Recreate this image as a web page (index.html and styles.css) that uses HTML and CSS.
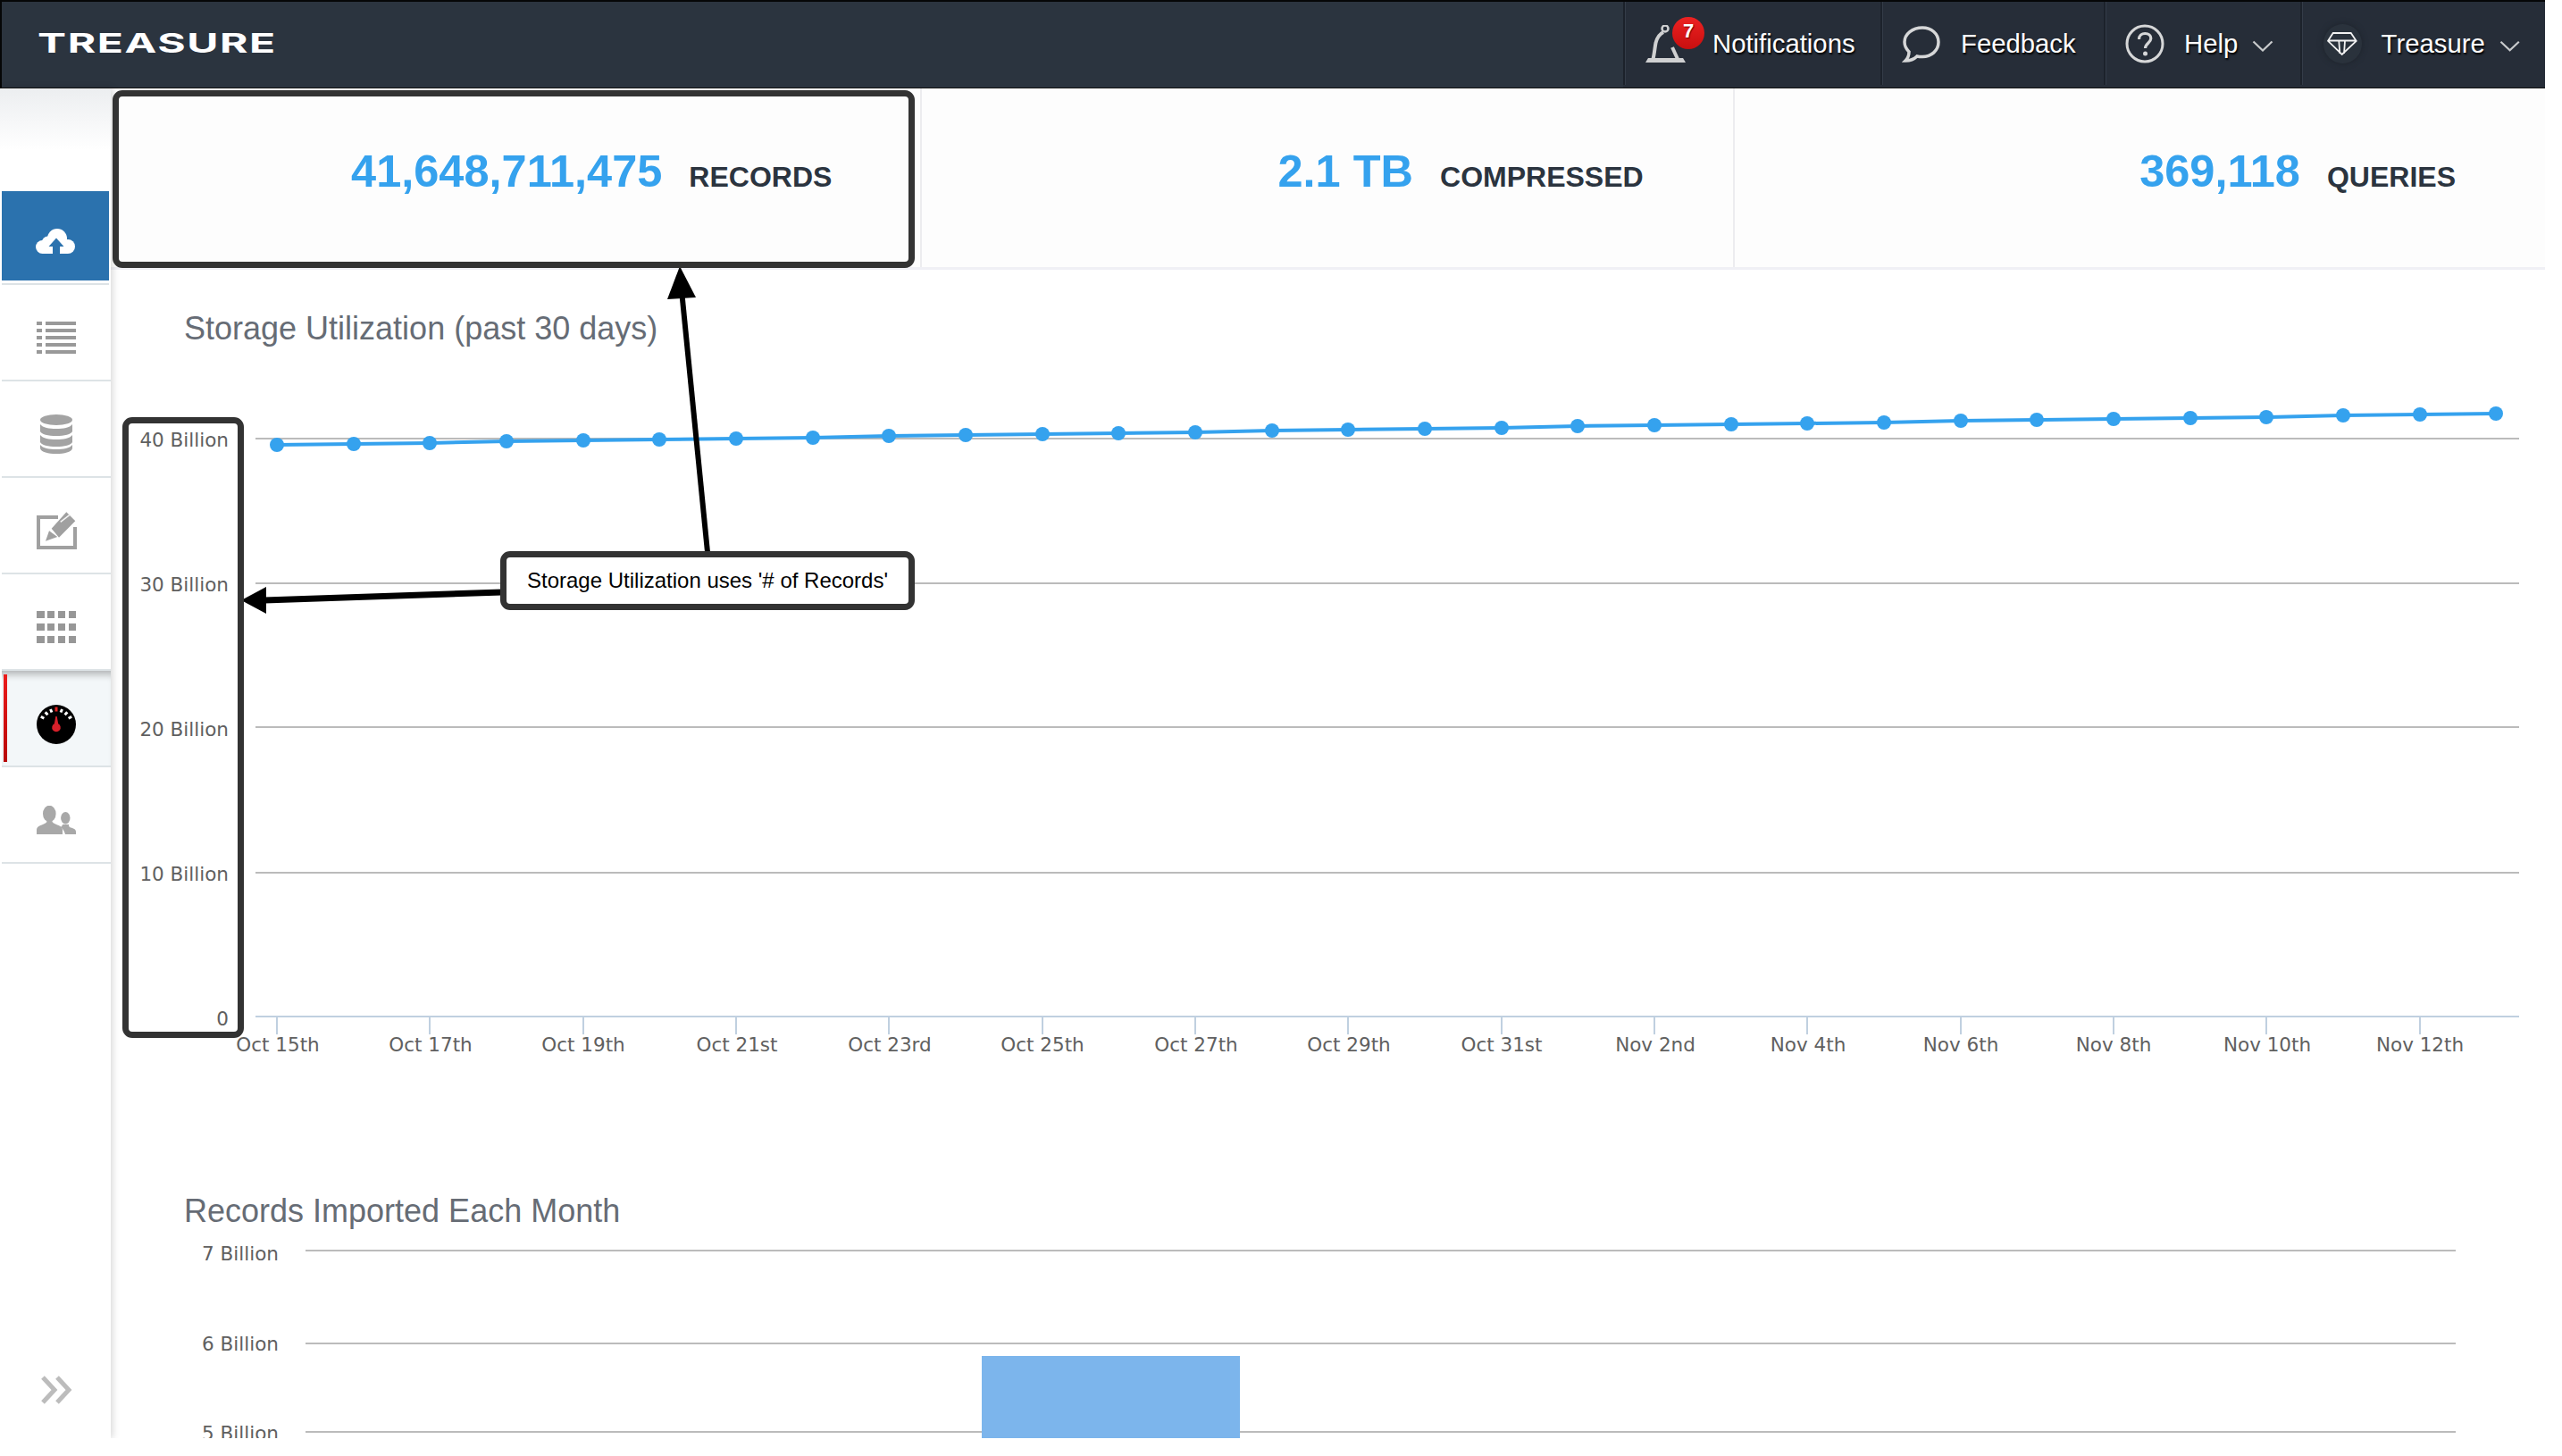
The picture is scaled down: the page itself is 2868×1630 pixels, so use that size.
FILE: index.html
```html
<!DOCTYPE html>
<html lang="en">
<head>
<meta charset="utf-8">
<title>Treasure</title>
<link rel="stylesheet" href="styles.css">
</head>
<body>
<div class="page">
  <header class="topbar">
    <div class="logo"><span class="logo-text">TREASURE</span></div>
    <nav class="nav">
      <a class="nav-item nav-notify">
        <span class="bell-wrap">
          <svg class="ico-bell" viewBox="0 0 45 42"><g fill="none" stroke="#cfd0d1"><circle cx="22" cy="4" r="3.500" stroke-width="2.500"/><path d="M20 8c-4 2-7 6-8.500 12-1 5-1.500 12-3 18" stroke-width="4"/><path d="M30 25l6 13" stroke-width="4"/></g><path d="M3 37h39l3 5H0z" fill="#cfd0d1"/></svg>
          <span class="badge">7</span>
        </span>
        <span class="nav-label">Notifications</span>
      </a>
      <a class="nav-item nav-feedback">
        <svg class="ico-chat" viewBox="0 0 44 42"><path d="M23 3C12 3 3 10 3 19c0 5 2 8 5 11 0 4-2 8-4 10 5 0 10-2 13-5 2 .5 4 .6 6 .6 10 0 18-7 18-16.500S33 3 23 3z" fill="none" stroke="#d6d7d8" stroke-width="3.500"/></svg>
        <span class="nav-label">Feedback</span>
      </a>
      <a class="nav-item nav-help">
        <svg class="ico-help" viewBox="0 0 44 44"><circle cx="22" cy="22" r="20" fill="none" stroke="#d6d7d8" stroke-width="3"/><path d="M15.500 17c0-4 3-6.500 6.800-6.500s6.500 2.300 6.500 5.500c0 5-6.300 5.500-6.300 11" fill="none" stroke="#d6d7d8" stroke-width="3.200"/><circle cx="22.500" cy="33" r="2.500" fill="#d6d7d8"/></svg>
        <span class="nav-label">Help</span>
        <svg class="ico-caret" viewBox="0 0 24 13"><path d="M1.500 1.500L12 11.500 22.500 1.500" fill="none" stroke="#c8cacc" stroke-width="2.200"/></svg>
      </a>
      <a class="nav-item nav-account">
        <span class="gem-wrap">
          <svg class="ico-gem" viewBox="0 0 34 26"><path d="M6.700 1h20l6 8.800L16.700 25 1 9.800zM1 9.500h32M13.300 10l1 14M20 10l-1 14" fill="none" stroke="#f2f2f2" stroke-width="1.800"/></svg>
        </span>
        <span class="nav-label">Treasure</span>
        <svg class="ico-caret" viewBox="0 0 24 13"><path d="M1.500 1.500L12 11.500 22.500 1.500" fill="none" stroke="#c8cacc" stroke-width="2.200"/></svg>
      </a>
    </nav>
  </header>

  <div class="body-row">
    <aside class="sidebar">
      <div class="side-top"></div>
      <ul class="side-list">
        <li class="side-item side-upload">
          <svg class="ico-cloud" viewBox="0 0 44 28"><g fill="#fff"><circle cx="7.500" cy="20.500" r="7.500"/><circle cx="24" cy="11" r="11"/><circle cx="13.500" cy="15" r="6.500"/><circle cx="36" cy="20" r="8"/><rect x="7.500" y="16" width="28.500" height="12"/></g><path d="M23 10.500L14.500 20H19v8h8v-8h4.500z" fill="#2b72ae"/></svg>
        </li>
        <li class="side-item">
          <svg class="ico-list" viewBox="0 0 44 36"><g fill="#999"><rect x="0" y="0" width="6" height="4"/><rect x="10" y="0" width="34" height="4"/><rect x="0" y="8" width="6" height="4"/><rect x="10" y="8" width="34" height="4"/><rect x="0" y="16" width="6" height="4"/><rect x="10" y="16" width="34" height="4"/><rect x="0" y="24" width="6" height="4"/><rect x="10" y="24" width="34" height="4"/><rect x="0" y="32" width="6" height="4"/><rect x="10" y="32" width="34" height="4"/></g></svg>
        </li>
        <li class="side-item">
          <svg class="ico-db" viewBox="0 0 36 44"><g fill="#a3a3a3"><ellipse cx="18" cy="6" rx="18" ry="6"/><path d="M0 11c3 4 10 5 18 5s15-1 18-5v8c-1 3-9 5-18 5S1 22 0 19z"/><path d="M0 23c3 4 10 5 18 5s15-1 18-5v8c-1 3-9 5-18 5S1 34 0 31z"/><path d="M0 34c3 4 10 5 18 5s15-1 18-5v4c-1 4-9 6-18 6S1 42 0 38z"/></g></svg>
        </li>
        <li class="side-item">
          <svg class="ico-edit" viewBox="0 0 45 44"><path d="M24 7H2V41H43V18" fill="none" stroke="#a0a0a0" stroke-width="4"/><path d="M16.700 19.700L33.300 1.300 43.300 11.300 25 29.700zM10 33.700L14 22.300 23.300 29z" fill="#a0a0a0"/><path d="M26.700 12.300L36.700 4.700" stroke="#f4f4f4" stroke-width="1.500"/></svg>
        </li>
        <li class="side-item">
          <svg class="ico-grid" viewBox="0 0 44 36"><g fill="#979797"><rect x="0" y="0" width="9" height="8"/><rect x="12" y="0" width="8" height="8"/><rect x="24" y="0" width="8" height="8"/><rect x="36" y="0" width="8" height="8"/><rect x="0" y="14" width="9" height="8"/><rect x="12" y="14" width="8" height="8"/><rect x="24" y="14" width="8" height="8"/><rect x="36" y="14" width="8" height="8"/><rect x="0" y="28" width="9" height="8"/><rect x="12" y="28" width="8" height="8"/><rect x="24" y="28" width="8" height="8"/><rect x="36" y="28" width="8" height="8"/></g></svg>
        </li>
        <li class="side-item side-active">
          <span class="side-marker"></span>
          <svg class="ico-gauge" viewBox="0 0 44 44"><circle cx="22" cy="22" r="22" fill="#000"/><path d="M4.800 13.300l3.500 2M9.700 8.300l2.700 3M15.500 5l1.500 3.500M28.500 5L27 8.500M34.300 8.300l-2.700 3M39.200 13.300l-3.500 2" stroke="#fff" stroke-width="3"/><rect x="20.500" y="2.500" width="3" height="5" fill="#e02020"/><path d="M21.300 13h1.400l1.500 8.200a4.800 4.800 0 1 1-4.400 0z" fill="#d8202a"/></svg>
        </li>
        <li class="side-item">
          <svg class="ico-users" viewBox="0 0 44 32"><g fill="#a8a8a8"><ellipse cx="14.300" cy="9" rx="7.300" ry="9.300"/><path d="M0 32v-5c0-4 5-5 9-7 2-1 3-2 3-5h5c0 3 1 4 3 5 4 2 9 3 9 7v5z"/><ellipse cx="32.300" cy="13.700" rx="5.200" ry="6.700"/><path d="M32 32h12v-3c0-3-4-4-7-5-1-1-1-2-1-3h-7c0 1-1 2-2 3 3 2 4 5 5 8z"/></g></svg>
        </li>
      </ul>
      <div class="side-foot">
        <svg class="ico-expand" viewBox="0 0 35 32"><path d="M2 2l13 14L2 30M18 2l13 14-13 14" fill="none" stroke="#bcbcbc" stroke-width="5"/></svg>
      </div>
    </aside>

    <main class="main">
      <section class="stats">
        <div class="stat stat-first"><span class="stat-num">41,648,711,475</span><span class="stat-label">RECORDS</span></div>
        <div class="stat"><span class="stat-num">2.1 TB</span><span class="stat-label">COMPRESSED</span></div>
        <div class="stat"><span class="stat-num">369,118</span><span class="stat-label">QUERIES</span></div>
      </section>

      <section class="chart-one">
        <h2 class="chart-title">Storage Utilization (past 30 days)</h2>
        <svg class="plot-one" viewBox="124 400 2725 800">
          <g class="grid">
            <path d="M286 491H2820M286 653H2820M286 814H2820M286 977H2820"/>
          </g>
          <path class="axis" d="M286 1138H2820M310 1138v20M481 1138v20M653 1138v20M824 1138v20M995 1138v20M1167 1138v20M1338 1138v20M1509 1138v20M1681 1138v20M1852 1138v20M2023 1138v20M2195 1138v20M2366 1138v20M2537 1138v20M2709 1138v20"/>
          <g class="y-labels">
            <text x="256" y="500">40 Billion</text>
            <text x="256" y="662">30 Billion</text>
            <text x="256" y="824">20 Billion</text>
            <text x="256" y="986">10 Billion</text>
            <text x="256" y="1148">0</text>
          </g>
          <g class="x-labels">
            <text x="311" y="1177">Oct 15th</text>
            <text x="482" y="1177">Oct 17th</text>
            <text x="653" y="1177">Oct 19th</text>
            <text x="825" y="1177">Oct 21st</text>
            <text x="996" y="1177">Oct 23rd</text>
            <text x="1167" y="1177">Oct 25th</text>
            <text x="1339" y="1177">Oct 27th</text>
            <text x="1510" y="1177">Oct 29th</text>
            <text x="1681" y="1177">Oct 31st</text>
            <text x="1853" y="1177">Nov 2nd</text>
            <text x="2024" y="1177">Nov 4th</text>
            <text x="2195" y="1177">Nov 6th</text>
            <text x="2366" y="1177">Nov 8th</text>
            <text x="2538" y="1177">Nov 10th</text>
            <text x="2709" y="1177">Nov 12th</text>
          </g>
          <polyline class="series" points="310,498 396,497 481,496 567,494 653,493 738,492 824,491 910,490 995,488 1081,487 1167,486 1252,485 1338,484 1424,482 1509,481 1595,480 1681,479 1766,477 1852,476 1938,475 2023,474 2109,473 2195,471 2280,470 2366,469 2452,468 2537,467 2623,465 2709,464 2794,463"/>
          <g class="dots">
            <circle cx="310" cy="498" r="8"/><circle cx="396" cy="497" r="8"/><circle cx="481" cy="496" r="8"/><circle cx="567" cy="494" r="8"/><circle cx="653" cy="493" r="8"/><circle cx="738" cy="492" r="8"/><circle cx="824" cy="491" r="8"/><circle cx="910" cy="490" r="8"/><circle cx="995" cy="488" r="8"/><circle cx="1081" cy="487" r="8"/><circle cx="1167" cy="486" r="8"/><circle cx="1252" cy="485" r="8"/><circle cx="1338" cy="484" r="8"/><circle cx="1424" cy="482" r="8"/><circle cx="1509" cy="481" r="8"/><circle cx="1595" cy="480" r="8"/><circle cx="1681" cy="479" r="8"/><circle cx="1766" cy="477" r="8"/><circle cx="1852" cy="476" r="8"/><circle cx="1938" cy="475" r="8"/><circle cx="2023" cy="474" r="8"/><circle cx="2109" cy="473" r="8"/><circle cx="2195" cy="471" r="8"/><circle cx="2280" cy="470" r="8"/><circle cx="2366" cy="469" r="8"/><circle cx="2452" cy="468" r="8"/><circle cx="2537" cy="467" r="8"/><circle cx="2623" cy="465" r="8"/><circle cx="2709" cy="464" r="8"/><circle cx="2794" cy="463" r="8"/>
          </g>
        </svg>
      </section>

      <section class="chart-two">
        <h2 class="chart-title">Records Imported Each Month</h2>
        <svg class="plot-two" viewBox="124 1380 2725 230">
          <path class="grid-line" d="M342 1400H2749M342 1504H2749M342 1603H2749"/>
          <rect class="bar" x="1099" y="1518" width="289" height="100"/>
          <g class="y-labels">
            <text x="312" y="1411">7 Billion</text>
            <text x="312" y="1512">6 Billion</text>
            <text x="312" y="1612">5 Billion</text>
          </g>
        </svg>
      </section>
    </main>
  </div>

  <div class="note-frame note-records"></div>
  <div class="note-frame note-axis"></div>
  <div class="note-frame note-callout">Storage Utilization uses '# of Records'</div>
  <svg class="note-arrows" viewBox="0 0 2849 1610">
    <path d="M792 618L763 325" stroke="#000" stroke-width="6" fill="none"/>
    <path d="M761 298L779 333L747 335z" fill="#000"/>
    <path d="M562 663L296 672" stroke="#000" stroke-width="7" fill="none"/>
    <path d="M270 672L298 657V687z" fill="#000"/>
  </svg>
</div>
</body>
</html>
```

FILE: styles.css
```css
* { box-sizing: border-box; }
html, body { margin: 0; padding: 0; background: #fff; }
.page {
  position: relative;
  width: 2849px;
  height: 1610px;
  overflow: hidden;
  background: #fff;
  font-family: "Liberation Sans", Arial, sans-serif;
}

/* top bar */
.topbar {
  display: flex;
  justify-content: space-between;
  height: 99px;
  background: #2b343f;
  border-top: 2px solid #050607;
  border-left: 2px solid #050607;
  border-bottom: 1px solid #111;
}
.logo { display: flex; align-items: center; padding-left: 40px; padding-bottom: 4px; }
.logo-text {
  display: block;
  font-family: Inter, sans-serif;
  font-size: 30px;
  font-weight: 700;
  line-height: 30px;
  letter-spacing: 1px;
  color: #fff;
  transform: scaleX(1.6);
  transform-origin: left center;
}
.nav { display: flex; background: #262d38; padding-bottom: 3px; }
.nav-item {
  display: flex;
  align-items: center;
  padding: 0 28px 0 24px;
  color: #fff;
  border-left: 2px solid #1c222b;
  box-shadow: inset 1px 0 0 #343c48;
}
.nav-notify { width: 288px; padding-left: 23px; }
.nav-feedback { width: 250px; padding-left: 22px; }
.nav-help { width: 220px; padding-left: 22px; }
.nav-account { width: 274px; }
.nav-label {
  font-size: 29.3px;
  line-height: 36px;
  color: #fff;
  text-shadow: 1px 2px 2px #000;
}
.bell-wrap { position: relative; display: block; width: 45px; height: 42px; margin-right: 30px; }
.ico-bell { display: block; width: 45px; height: 42px; }
.badge {
  position: absolute;
  left: 30px;
  top: -9px;
  width: 36px;
  height: 36px;
  border-radius: 50%;
  background: linear-gradient(#ec2222, #c80f0f);
  color: #fff;
  font-size: 22px;
  font-weight: 700;
  line-height: 32px;
  text-align: center;
  text-shadow: 1px 1px 1px #700;
}
.ico-chat { display: block; width: 44px; height: 42px; margin-right: 22px; }
.ico-help { display: block; width: 44px; height: 44px; margin-right: 22px; }
.ico-caret { display: block; width: 24px; height: 13px; margin-left: 16px; margin-top: 6px; }
.gem-wrap {
  display: flex;
  align-items: center;
  justify-content: center;
  width: 44px;
  height: 44px;
  margin-right: 22px;
  border-radius: 50%;
  background: #2a323c;
  box-shadow: 0 0 6px #1d232b;
}
.ico-gem { display: block; width: 34px; height: 26px; }

/* layout */
.body-row { display: flex; height: 1511px; }
.sidebar {
  position: relative;
  display: flex;
  flex-direction: column;
  flex: 0 0 124px;
  background: #fff;
  box-shadow: 2px 0 8px rgba(0, 0, 0, 0.16);
  z-index: 1;
}
.side-top {
  height: 115px;
  background: linear-gradient(#eceef0, #fff 60%);
}
.side-list { list-style: none; margin: 0; padding: 0; }
.side-item {
  position: relative;
  display: flex;
  align-items: center;
  justify-content: center;
  height: 108px;
  margin-left: 2px;
  padding-top: 12px;
  border-bottom: 2px solid #dde3e6;
}
.side-upload {
  height: 105px;
  padding-top: 8px;
  background: #2b72ae;
  margin-right: 2px;
  box-shadow: inset 0 -3px 0 #fff;
}
.side-active {
  padding-top: 14px;
  background: #f3f7f9;
  box-shadow: inset 0 10px 8px -6px rgba(0, 0, 0, 0.28);
}
.side-marker {
  position: absolute;
  left: 2px;
  top: 4px;
  bottom: 4px;
  width: 4px;
  background: linear-gradient(#ec1c1c, #b80808);
}
.ico-cloud { display: block; width: 44px; height: 28px; }
.ico-list, .ico-grid { display: block; width: 44px; height: 36px; }
.ico-db { display: block; width: 36px; height: 44px; }
.ico-edit { display: block; width: 45px; height: 44px; }
.ico-gauge { display: block; width: 44px; height: 44px; }
.ico-users { display: block; width: 44px; height: 32px; }
.side-foot { margin-top: auto; padding: 0 0 38px 46px; }
.ico-expand { display: block; width: 35px; height: 32px; }

/* content */
.main { flex: 1 1 auto; min-width: 0; }
.stats {
  display: flex;
  height: 203px;
  background: #fdfdfd;
  border-bottom: 3px solid #f0f0f5;
}
.stat {
  display: flex;
  flex: 1 1 0;
  align-items: baseline;
  justify-content: flex-end;
  gap: 30px;
  padding: 65px 100px 0 0;
  border-right: 2px solid #ececef;
}
.stat-first { padding-right: 99px; }
.stat:last-child { border-right: 0; }
.stat-num { font-size: 50.5px; font-weight: 700; line-height: 56px; color: #35a2ee; }
.stat-label { font-size: 32px; font-weight: 700; line-height: 40px; color: #2b343f; }

.chart-title {
  margin: 0 0 0 82px;
  font-size: 36px;
  font-weight: 400;
  line-height: 44px;
  color: #666c75;
}
.chart-one { padding-top: 44px; }
.plot-one { display: block; width: 2725px; height: 800px; margin-top: 10px; }
.chart-two { padding-top: 134px; }
.plot-two { display: block; width: 2725px; height: 230px; margin-top: 2px; }

.grid path, .grid-line { fill: none; stroke: #bbb; stroke-width: 2; }
.axis { fill: none; stroke: #c0d0e0; stroke-width: 2; }
.series { fill: none; stroke: #35a2ee; stroke-width: 4; }
.dots circle { fill: #35a2ee; }
.bar { fill: #7cb5ec; }
.y-labels text {
  font-family: "DejaVu Sans", sans-serif;
  font-size: 21.5px;
  fill: #606060;
  text-anchor: end;
}
.x-labels text {
  font-family: "DejaVu Sans", sans-serif;
  font-size: 21.5px;
  fill: #606060;
  text-anchor: middle;
}

/* annotations laid over the page */
.note-frame {
  position: absolute;
  border: 7px solid #333;
  border-radius: 11px;
  z-index: 3;
}
.note-records { left: 126px; top: 101px; width: 898px; height: 199px; }
.note-axis { left: 137px; top: 467px; width: 136px; height: 695px; }
.note-callout {
  left: 560px;
  top: 617px;
  width: 464px;
  height: 66px;
  background: #fff;
  color: #000;
  font-size: 24px;
  line-height: 52px;
  text-align: center;
  white-space: nowrap;
}
.note-arrows {
  position: absolute;
  left: 0;
  top: 0;
  width: 2849px;
  height: 1610px;
  z-index: 2;
  pointer-events: none;
}
```
